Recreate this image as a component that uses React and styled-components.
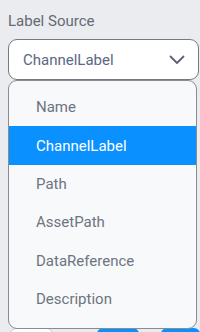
import React from "react";
import styled, { createGlobalStyle } from "styled-components";

const GlobalStyle = createGlobalStyle`
  html, body {
    margin: 0;
    padding: 0;
    background: #ebecef;
    font-family: Roboto, "Liberation Sans", sans-serif;
  }
`;

const Page = styled.div`
  width: 200px;
  height: 332px;
  overflow: hidden;
  padding: 0 0 0 8px;
  box-sizing: border-box;
`;

const Label = styled.div`
  font-size: 15px;
  color: #636a75;
  padding-top: 12px;
  height: 39px;
  box-sizing: border-box;
  line-height: 18px;
`;

const Field = styled.div`
  position: relative;
`;

const Select = styled.div`
  height: 41px;
  box-sizing: border-box;
  margin-right: 1px;
  border: 1px solid #77797d;
  border-radius: 9px;
  background: #fff;
  display: flex;
  align-items: center;
  justify-content: space-between;
  padding: 0 13px 0 14px;
  font-size: 15px;
  color: #5b6882;
`;

const Menu = styled.ul`
  position: absolute;
  top: 41px;
  left: 0;
  right: 3px;
  margin: 0;
  padding: 7px 0 10px;
  list-style: none;
  background: #f8f9fb;
  border: 1px solid #8a8c90;
  border-radius: 9px;
  z-index: 2;
`;

const Item = styled.li`
  height: 38.4px;
  display: flex;
  align-items: center;
  padding-left: 27px;
  font-size: 15px;
  color: ${(p) => (p.$active ? "#ffffff" : "#6e7480")};
  background: ${(p) => (p.$active ? "#0b90ff" : "transparent")};
`;

const Footer = styled.div`
  display: flex;
  margin-top: 248px;
  height: 30px;
`;

const Ghost = styled.div`
  width: 44px;
  height: 30px;
  background: #fff;
  border: 1px solid #c9ccd1;
  border-radius: 6px;
  box-sizing: border-box;
  margin-left: 2px;
`;

const Blue = styled.div`
  width: ${(p) => p.$w}px;
  margin-left: ${(p) => p.$ml}px;
  height: 30px;
  background: #0b90ff;
  border-radius: 6px;
`;

const Chevron = () => (
  <svg width="16" height="10" viewBox="0 0 16 10" fill="none">
    <path d="M1.5 1.5 L8 8 L14.5 1.5" stroke="#5b6272" strokeWidth="1.8" strokeLinecap="round" strokeLinejoin="round" />
  </svg>
);

const options = ["Name", "ChannelLabel", "Path", "AssetPath", "DataReference", "Description"];

export default function App() {
  return (
    <>
      <GlobalStyle />
      <Page>
        <Label>Label Source</Label>
        <Field>
          <Select>
            <span>ChannelLabel</span>
            <Chevron />
          </Select>
          <Menu>
            {options.map((o) => (
              <Item key={o} $active={o === "ChannelLabel"}>
                {o}
              </Item>
            ))}
          </Menu>
          <Footer>
            <Ghost />
            <Blue $w={44} $ml={44} />
            <Blue $w={40} $ml={22} />
          </Footer>
        </Field>
      </Page>
    </>
  );
}
